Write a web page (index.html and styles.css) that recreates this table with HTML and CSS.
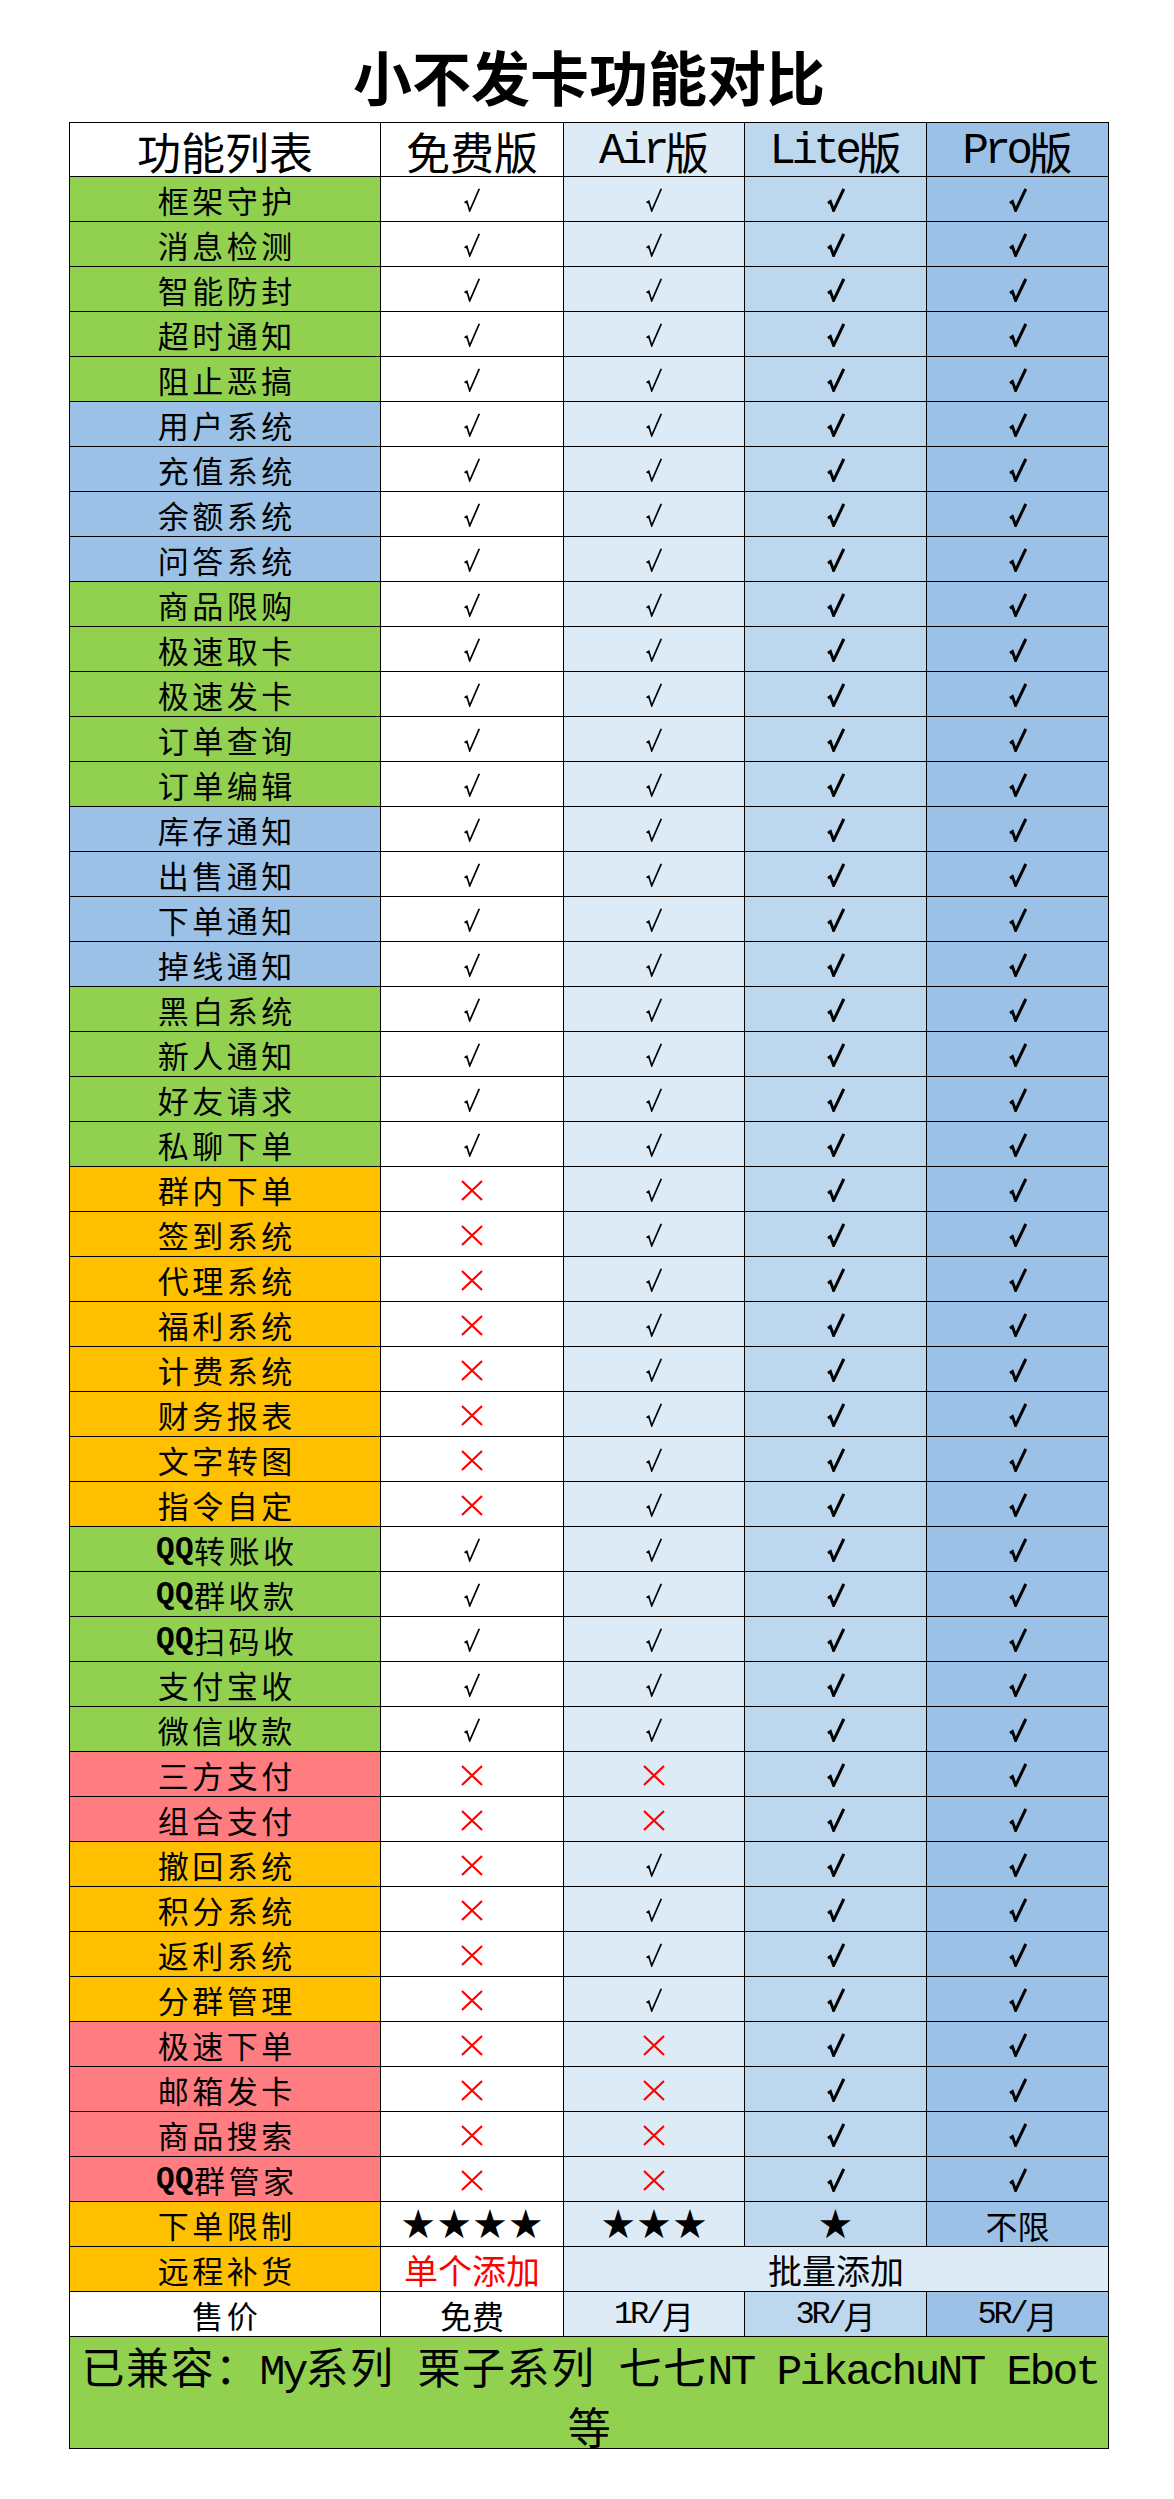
FILE: index.html
```html
<!DOCTYPE html>
<html lang="zh-CN">
<head>
<meta charset="utf-8">
<title>小不发卡功能对比</title>
<link rel="stylesheet" href="styles.css">
</head>
<body>
<svg class="defs" width="0" height="0" aria-hidden="true">
  <symbol id="t" viewBox="0 0 16 24">
    <path d="M0.6 14.6 L2.8 13.2 L5.7 22.8 L15.3 0.8" fill="none" stroke="#000" stroke-width="1.7" stroke-linejoin="miter"/>
    <path d="M0.4 14.4 L2.9 12.8 L3.9 16.2 Z" fill="#000"/>
  </symbol>
  <symbol id="b" viewBox="0 0 18 24">
    <path d="M1 15.2 L3.4 13.6 L6.6 22.4 L16.8 1" fill="none" stroke="#000" stroke-width="3" stroke-linejoin="miter"/>
  </symbol>
  <symbol id="x" viewBox="0 0 22 21">
    <path d="M1 1 L21 20 M21 1 L1 20" fill="none" stroke="#ff0000" stroke-width="2.2"/>
  </symbol>
</svg>

<div class="title">小不发卡功能对比</div>

<div class="table">
  <div class="row head">
    <div class="c w hd">功能列表</div>
    <div class="c w hd">免费版</div>
    <div class="c a hd"><span class="lt">Air</span>版</div>
    <div class="c l hd"><span class="lt">Lite</span>版</div>
    <div class="c p hd"><span class="lt">Pro</span>版</div>
  </div>

  <div class="row"><div class="c f g">框架守护</div><div class="c w"><svg class="ck"><use href="#t"/></svg></div><div class="c a"><svg class="ck"><use href="#t"/></svg></div><div class="c l"><svg class="cb"><use href="#b"/></svg></div><div class="c p"><svg class="cb"><use href="#b"/></svg></div></div>
  <div class="row"><div class="c f g">消息检测</div><div class="c w"><svg class="ck"><use href="#t"/></svg></div><div class="c a"><svg class="ck"><use href="#t"/></svg></div><div class="c l"><svg class="cb"><use href="#b"/></svg></div><div class="c p"><svg class="cb"><use href="#b"/></svg></div></div>
  <div class="row"><div class="c f g">智能防封</div><div class="c w"><svg class="ck"><use href="#t"/></svg></div><div class="c a"><svg class="ck"><use href="#t"/></svg></div><div class="c l"><svg class="cb"><use href="#b"/></svg></div><div class="c p"><svg class="cb"><use href="#b"/></svg></div></div>
  <div class="row"><div class="c f g">超时通知</div><div class="c w"><svg class="ck"><use href="#t"/></svg></div><div class="c a"><svg class="ck"><use href="#t"/></svg></div><div class="c l"><svg class="cb"><use href="#b"/></svg></div><div class="c p"><svg class="cb"><use href="#b"/></svg></div></div>
  <div class="row"><div class="c f g">阻止恶搞</div><div class="c w"><svg class="ck"><use href="#t"/></svg></div><div class="c a"><svg class="ck"><use href="#t"/></svg></div><div class="c l"><svg class="cb"><use href="#b"/></svg></div><div class="c p"><svg class="cb"><use href="#b"/></svg></div></div>
  <div class="row"><div class="c f bl">用户系统</div><div class="c w"><svg class="ck"><use href="#t"/></svg></div><div class="c a"><svg class="ck"><use href="#t"/></svg></div><div class="c l"><svg class="cb"><use href="#b"/></svg></div><div class="c p"><svg class="cb"><use href="#b"/></svg></div></div>
  <div class="row"><div class="c f bl">充值系统</div><div class="c w"><svg class="ck"><use href="#t"/></svg></div><div class="c a"><svg class="ck"><use href="#t"/></svg></div><div class="c l"><svg class="cb"><use href="#b"/></svg></div><div class="c p"><svg class="cb"><use href="#b"/></svg></div></div>
  <div class="row"><div class="c f bl">余额系统</div><div class="c w"><svg class="ck"><use href="#t"/></svg></div><div class="c a"><svg class="ck"><use href="#t"/></svg></div><div class="c l"><svg class="cb"><use href="#b"/></svg></div><div class="c p"><svg class="cb"><use href="#b"/></svg></div></div>
  <div class="row"><div class="c f bl">问答系统</div><div class="c w"><svg class="ck"><use href="#t"/></svg></div><div class="c a"><svg class="ck"><use href="#t"/></svg></div><div class="c l"><svg class="cb"><use href="#b"/></svg></div><div class="c p"><svg class="cb"><use href="#b"/></svg></div></div>
  <div class="row"><div class="c f g">商品限购</div><div class="c w"><svg class="ck"><use href="#t"/></svg></div><div class="c a"><svg class="ck"><use href="#t"/></svg></div><div class="c l"><svg class="cb"><use href="#b"/></svg></div><div class="c p"><svg class="cb"><use href="#b"/></svg></div></div>
  <div class="row"><div class="c f g">极速取卡</div><div class="c w"><svg class="ck"><use href="#t"/></svg></div><div class="c a"><svg class="ck"><use href="#t"/></svg></div><div class="c l"><svg class="cb"><use href="#b"/></svg></div><div class="c p"><svg class="cb"><use href="#b"/></svg></div></div>
  <div class="row"><div class="c f g">极速发卡</div><div class="c w"><svg class="ck"><use href="#t"/></svg></div><div class="c a"><svg class="ck"><use href="#t"/></svg></div><div class="c l"><svg class="cb"><use href="#b"/></svg></div><div class="c p"><svg class="cb"><use href="#b"/></svg></div></div>
  <div class="row"><div class="c f g">订单查询</div><div class="c w"><svg class="ck"><use href="#t"/></svg></div><div class="c a"><svg class="ck"><use href="#t"/></svg></div><div class="c l"><svg class="cb"><use href="#b"/></svg></div><div class="c p"><svg class="cb"><use href="#b"/></svg></div></div>
  <div class="row"><div class="c f g">订单编辑</div><div class="c w"><svg class="ck"><use href="#t"/></svg></div><div class="c a"><svg class="ck"><use href="#t"/></svg></div><div class="c l"><svg class="cb"><use href="#b"/></svg></div><div class="c p"><svg class="cb"><use href="#b"/></svg></div></div>
  <div class="row"><div class="c f bl">库存通知</div><div class="c w"><svg class="ck"><use href="#t"/></svg></div><div class="c a"><svg class="ck"><use href="#t"/></svg></div><div class="c l"><svg class="cb"><use href="#b"/></svg></div><div class="c p"><svg class="cb"><use href="#b"/></svg></div></div>
  <div class="row"><div class="c f bl">出售通知</div><div class="c w"><svg class="ck"><use href="#t"/></svg></div><div class="c a"><svg class="ck"><use href="#t"/></svg></div><div class="c l"><svg class="cb"><use href="#b"/></svg></div><div class="c p"><svg class="cb"><use href="#b"/></svg></div></div>
  <div class="row"><div class="c f bl">下单通知</div><div class="c w"><svg class="ck"><use href="#t"/></svg></div><div class="c a"><svg class="ck"><use href="#t"/></svg></div><div class="c l"><svg class="cb"><use href="#b"/></svg></div><div class="c p"><svg class="cb"><use href="#b"/></svg></div></div>
  <div class="row"><div class="c f bl">掉线通知</div><div class="c w"><svg class="ck"><use href="#t"/></svg></div><div class="c a"><svg class="ck"><use href="#t"/></svg></div><div class="c l"><svg class="cb"><use href="#b"/></svg></div><div class="c p"><svg class="cb"><use href="#b"/></svg></div></div>
  <div class="row"><div class="c f g">黑白系统</div><div class="c w"><svg class="ck"><use href="#t"/></svg></div><div class="c a"><svg class="ck"><use href="#t"/></svg></div><div class="c l"><svg class="cb"><use href="#b"/></svg></div><div class="c p"><svg class="cb"><use href="#b"/></svg></div></div>
  <div class="row"><div class="c f g">新人通知</div><div class="c w"><svg class="ck"><use href="#t"/></svg></div><div class="c a"><svg class="ck"><use href="#t"/></svg></div><div class="c l"><svg class="cb"><use href="#b"/></svg></div><div class="c p"><svg class="cb"><use href="#b"/></svg></div></div>
  <div class="row"><div class="c f g">好友请求</div><div class="c w"><svg class="ck"><use href="#t"/></svg></div><div class="c a"><svg class="ck"><use href="#t"/></svg></div><div class="c l"><svg class="cb"><use href="#b"/></svg></div><div class="c p"><svg class="cb"><use href="#b"/></svg></div></div>
  <div class="row"><div class="c f g">私聊下单</div><div class="c w"><svg class="ck"><use href="#t"/></svg></div><div class="c a"><svg class="ck"><use href="#t"/></svg></div><div class="c l"><svg class="cb"><use href="#b"/></svg></div><div class="c p"><svg class="cb"><use href="#b"/></svg></div></div>
  <div class="row"><div class="c f o">群内下单</div><div class="c w"><svg class="cx"><use href="#x"/></svg></div><div class="c a"><svg class="ck"><use href="#t"/></svg></div><div class="c l"><svg class="cb"><use href="#b"/></svg></div><div class="c p"><svg class="cb"><use href="#b"/></svg></div></div>
  <div class="row"><div class="c f o">签到系统</div><div class="c w"><svg class="cx"><use href="#x"/></svg></div><div class="c a"><svg class="ck"><use href="#t"/></svg></div><div class="c l"><svg class="cb"><use href="#b"/></svg></div><div class="c p"><svg class="cb"><use href="#b"/></svg></div></div>
  <div class="row"><div class="c f o">代理系统</div><div class="c w"><svg class="cx"><use href="#x"/></svg></div><div class="c a"><svg class="ck"><use href="#t"/></svg></div><div class="c l"><svg class="cb"><use href="#b"/></svg></div><div class="c p"><svg class="cb"><use href="#b"/></svg></div></div>
  <div class="row"><div class="c f o">福利系统</div><div class="c w"><svg class="cx"><use href="#x"/></svg></div><div class="c a"><svg class="ck"><use href="#t"/></svg></div><div class="c l"><svg class="cb"><use href="#b"/></svg></div><div class="c p"><svg class="cb"><use href="#b"/></svg></div></div>
  <div class="row"><div class="c f o">计费系统</div><div class="c w"><svg class="cx"><use href="#x"/></svg></div><div class="c a"><svg class="ck"><use href="#t"/></svg></div><div class="c l"><svg class="cb"><use href="#b"/></svg></div><div class="c p"><svg class="cb"><use href="#b"/></svg></div></div>
  <div class="row"><div class="c f o">财务报表</div><div class="c w"><svg class="cx"><use href="#x"/></svg></div><div class="c a"><svg class="ck"><use href="#t"/></svg></div><div class="c l"><svg class="cb"><use href="#b"/></svg></div><div class="c p"><svg class="cb"><use href="#b"/></svg></div></div>
  <div class="row"><div class="c f o">文字转图</div><div class="c w"><svg class="cx"><use href="#x"/></svg></div><div class="c a"><svg class="ck"><use href="#t"/></svg></div><div class="c l"><svg class="cb"><use href="#b"/></svg></div><div class="c p"><svg class="cb"><use href="#b"/></svg></div></div>
  <div class="row"><div class="c f o">指令自定</div><div class="c w"><svg class="cx"><use href="#x"/></svg></div><div class="c a"><svg class="ck"><use href="#t"/></svg></div><div class="c l"><svg class="cb"><use href="#b"/></svg></div><div class="c p"><svg class="cb"><use href="#b"/></svg></div></div>
  <div class="row"><div class="c f g"><span class="lt">QQ</span>转账收</div><div class="c w"><svg class="ck"><use href="#t"/></svg></div><div class="c a"><svg class="ck"><use href="#t"/></svg></div><div class="c l"><svg class="cb"><use href="#b"/></svg></div><div class="c p"><svg class="cb"><use href="#b"/></svg></div></div>
  <div class="row"><div class="c f g"><span class="lt">QQ</span>群收款</div><div class="c w"><svg class="ck"><use href="#t"/></svg></div><div class="c a"><svg class="ck"><use href="#t"/></svg></div><div class="c l"><svg class="cb"><use href="#b"/></svg></div><div class="c p"><svg class="cb"><use href="#b"/></svg></div></div>
  <div class="row"><div class="c f g"><span class="lt">QQ</span>扫码收</div><div class="c w"><svg class="ck"><use href="#t"/></svg></div><div class="c a"><svg class="ck"><use href="#t"/></svg></div><div class="c l"><svg class="cb"><use href="#b"/></svg></div><div class="c p"><svg class="cb"><use href="#b"/></svg></div></div>
  <div class="row"><div class="c f g">支付宝收</div><div class="c w"><svg class="ck"><use href="#t"/></svg></div><div class="c a"><svg class="ck"><use href="#t"/></svg></div><div class="c l"><svg class="cb"><use href="#b"/></svg></div><div class="c p"><svg class="cb"><use href="#b"/></svg></div></div>
  <div class="row"><div class="c f g">微信收款</div><div class="c w"><svg class="ck"><use href="#t"/></svg></div><div class="c a"><svg class="ck"><use href="#t"/></svg></div><div class="c l"><svg class="cb"><use href="#b"/></svg></div><div class="c p"><svg class="cb"><use href="#b"/></svg></div></div>
  <div class="row"><div class="c f r">三方支付</div><div class="c w"><svg class="cx"><use href="#x"/></svg></div><div class="c a"><svg class="cx"><use href="#x"/></svg></div><div class="c l"><svg class="cb"><use href="#b"/></svg></div><div class="c p"><svg class="cb"><use href="#b"/></svg></div></div>
  <div class="row"><div class="c f r">组合支付</div><div class="c w"><svg class="cx"><use href="#x"/></svg></div><div class="c a"><svg class="cx"><use href="#x"/></svg></div><div class="c l"><svg class="cb"><use href="#b"/></svg></div><div class="c p"><svg class="cb"><use href="#b"/></svg></div></div>
  <div class="row"><div class="c f o">撤回系统</div><div class="c w"><svg class="cx"><use href="#x"/></svg></div><div class="c a"><svg class="ck"><use href="#t"/></svg></div><div class="c l"><svg class="cb"><use href="#b"/></svg></div><div class="c p"><svg class="cb"><use href="#b"/></svg></div></div>
  <div class="row"><div class="c f o">积分系统</div><div class="c w"><svg class="cx"><use href="#x"/></svg></div><div class="c a"><svg class="ck"><use href="#t"/></svg></div><div class="c l"><svg class="cb"><use href="#b"/></svg></div><div class="c p"><svg class="cb"><use href="#b"/></svg></div></div>
  <div class="row"><div class="c f o">返利系统</div><div class="c w"><svg class="cx"><use href="#x"/></svg></div><div class="c a"><svg class="ck"><use href="#t"/></svg></div><div class="c l"><svg class="cb"><use href="#b"/></svg></div><div class="c p"><svg class="cb"><use href="#b"/></svg></div></div>
  <div class="row"><div class="c f o">分群管理</div><div class="c w"><svg class="cx"><use href="#x"/></svg></div><div class="c a"><svg class="ck"><use href="#t"/></svg></div><div class="c l"><svg class="cb"><use href="#b"/></svg></div><div class="c p"><svg class="cb"><use href="#b"/></svg></div></div>
  <div class="row"><div class="c f r">极速下单</div><div class="c w"><svg class="cx"><use href="#x"/></svg></div><div class="c a"><svg class="cx"><use href="#x"/></svg></div><div class="c l"><svg class="cb"><use href="#b"/></svg></div><div class="c p"><svg class="cb"><use href="#b"/></svg></div></div>
  <div class="row"><div class="c f r">邮箱发卡</div><div class="c w"><svg class="cx"><use href="#x"/></svg></div><div class="c a"><svg class="cx"><use href="#x"/></svg></div><div class="c l"><svg class="cb"><use href="#b"/></svg></div><div class="c p"><svg class="cb"><use href="#b"/></svg></div></div>
  <div class="row"><div class="c f r">商品搜索</div><div class="c w"><svg class="cx"><use href="#x"/></svg></div><div class="c a"><svg class="cx"><use href="#x"/></svg></div><div class="c l"><svg class="cb"><use href="#b"/></svg></div><div class="c p"><svg class="cb"><use href="#b"/></svg></div></div>
  <div class="row"><div class="c f r"><span class="lt">QQ</span>群管家</div><div class="c w"><svg class="cx"><use href="#x"/></svg></div><div class="c a"><svg class="cx"><use href="#x"/></svg></div><div class="c l"><svg class="cb"><use href="#b"/></svg></div><div class="c p"><svg class="cb"><use href="#b"/></svg></div></div>

  <div class="row"><div class="c f o">下单限制</div><div class="c w star">★★★★</div><div class="c a star">★★★</div><div class="c l star">★</div><div class="c p txt">不限</div></div>
  <div class="row"><div class="c f o">远程补货</div><div class="c w txt red">单个添加</div><div class="c a txt span3">批量添加</div></div>
  <div class="row"><div class="c f w">售价</div><div class="c w txt">免费</div><div class="c a txt"><span class="lt">1R/</span>月</div><div class="c l txt"><span class="lt">3R/</span>月</div><div class="c p txt"><span class="lt">5R/</span>月</div></div>

  <div class="foot">已兼容：<span class="lt">My</span>系列<span class="lt"> </span>栗子系列<span class="lt"> </span>七七<span class="lt">NT PikachuNT Ebot</span><br>等</div>
</div>
</body>
</html>
```

FILE: styles.css
```css
html, body {
  margin: 0;
  padding: 0;
  background: #ffffff;
}

body {
  font-family: "Noto Sans CJK SC", "Noto Sans", sans-serif;
  color: #000000;
  width: 1174px;
}

.defs {
  display: block;
  width: 0;
  height: 0;
  overflow: hidden;
}

.title {
  margin: 30px 0 0 69px;
  width: 1040px;
  height: 92px;
  line-height: 92px;
  text-align: center;
  font-size: 59px;
  font-weight: 700;
}

.table {
  margin-left: 69px;
  width: 1040px;
  box-sizing: border-box;
  border-top: 1px solid #000;
  border-left: 1px solid #000;
}

.row {
  display: grid;
  grid-template-columns: 311px 183px 181px 182px 182px;
  height: 45px;
}

.row.head {
  height: 54px;
}

.c {
  box-sizing: border-box;
  border-right: 1px solid #000;
  border-bottom: 1px solid #000;
  display: flex;
  align-items: center;
  justify-content: center;
  white-space: nowrap;
}

.lt {
  font-family: "Liberation Mono", monospace;
  letter-spacing: -0.1em;
}

.hd {
  font-size: 44px;
  line-height: 50px;
  padding-top: 2px;
}

.f {
  font-size: 31px;
  letter-spacing: 3.5px;
  padding-left: 3.5px;
  line-height: 40px;
  padding-top: 1px;
}

.f .lt {
  letter-spacing: 0.4px;
  font-weight: 700;
}

.txt {
  font-size: 32px;
  line-height: 40px;
  padding-top: 1px;
}

.red {
  color: #ff0000;
  font-size: 34px;
}

.span3 {
  grid-column: 3 / 6;
  font-size: 34px;
}

.star {
  font-family: "DejaVu Sans", sans-serif;
  font-size: 40px;
  line-height: 42px;
}

.w { background: #ffffff; }
.a { background: #ddebf7; }
.l { background: #bdd7ee; }
.p { background: #9bc2e6; }
.g { background: #92d050; }
.bl { background: #9bc2e6; }
.o { background: #ffc000; }
.r { background: #ff7c80; }

.ck {
  width: 16px;
  height: 24px;
  margin-top: 1px;
}

.cb {
  width: 18px;
  height: 24px;
  margin-top: 1px;
}

.cx {
  width: 22px;
  height: 21px;
  margin-top: 2px;
}

.foot {
  box-sizing: border-box;
  height: 112px;
  border-right: 1px solid #000;
  border-bottom: 1px solid #000;
  background: #92d050;
  font-size: 43px;
  line-height: 53px;
  text-align: center;
  padding-top: 2px;
  padding-left: 2px;
  white-space: nowrap;
  letter-spacing: 1.5px;
}

.foot .lt {
  letter-spacing: calc(1.5px - 0.1em);
}
```
